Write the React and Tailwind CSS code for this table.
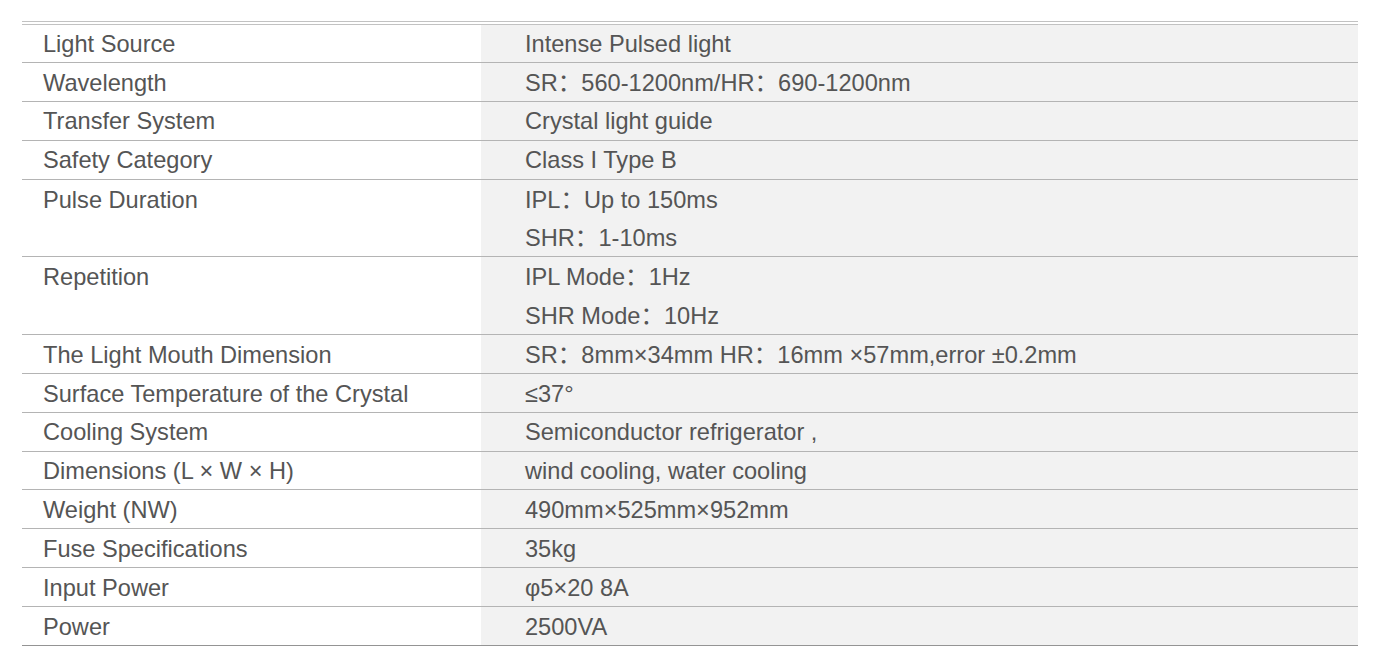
const specs = [
  { label: 'Light Source', values: ['Intense Pulsed light'], first: true },
  { label: 'Wavelength', values: ['SR：560-1200nm/HR：690-1200nm'] },
  { label: 'Transfer System', values: ['Crystal light guide'] },
  { label: 'Safety Category', values: ['Class I Type B'] },
  { label: 'Pulse Duration', values: ['IPL：Up to 150ms', 'SHR：1-10ms'] },
  { label: 'Repetition', values: ['IPL Mode：1Hz', 'SHR Mode：10Hz'] },
  { label: 'The Light Mouth Dimension', values: ['SR：8mm×34mm HR：16mm ×57mm,error ±0.2mm'] },
  { label: 'Surface Temperature of the Crystal', values: ['≤37°'] },
  { label: 'Cooling System', values: ['Semiconductor refrigerator ,'] },
  { label: 'Dimensions (L × W × H)', values: ['wind cooling, water cooling'] },
  { label: 'Weight (NW)', values: ['490mm×525mm×952mm'] },
  { label: 'Fuse Specifications', values: ['35kg'] },
  { label: 'Input Power', values: ['φ5×20 8A'] },
  { label: 'Power', values: ['2500VA'], last: true },
];

// each text line takes 38.87px; the row's border eats 1px of the last one
function lineHeight(first, isLast) {
  if (first) return 'h-[37px]';
  return isLast ? 'h-[37.87px]' : 'h-[38.87px]';
}

function SpecRow({ label, values, first, last }) {
  const border = last ? 'border-[#949494]' : 'border-[#b4b4b4]';
  return (
    <div className={`flex border-b ${border}`}>
      <div className="w-[459px] shrink-0 pl-[21px]">
        <div className={`flex items-center pt-[3px] ${lineHeight(first, values.length === 1)}`}>{label}</div>
      </div>
      <div className="flex-1 bg-[#f2f2f2] pl-[44px]">
        {values.map((v, i) => (
          <div key={i} className={`flex items-center pt-[3px] ${lineHeight(first, i === values.length - 1)}`}>
            {v}
          </div>
        ))}
      </div>
    </div>
  );
}

export default function App() {
  return (
    <div className="min-h-screen bg-white pt-[21px] pl-[22px] pr-[23px]">
      <div
        className="w-[1336px] border-t-4 border-double border-[#c2c2c2] text-[23.6px] leading-none text-[#555555]"
        style={{ fontFamily: '"Liberation Sans", "Noto Sans CJK SC", Arial, sans-serif' }}
      >
        {specs.map((s) => (
          <SpecRow key={s.label} {...s} />
        ))}
      </div>
    </div>
  );
}
